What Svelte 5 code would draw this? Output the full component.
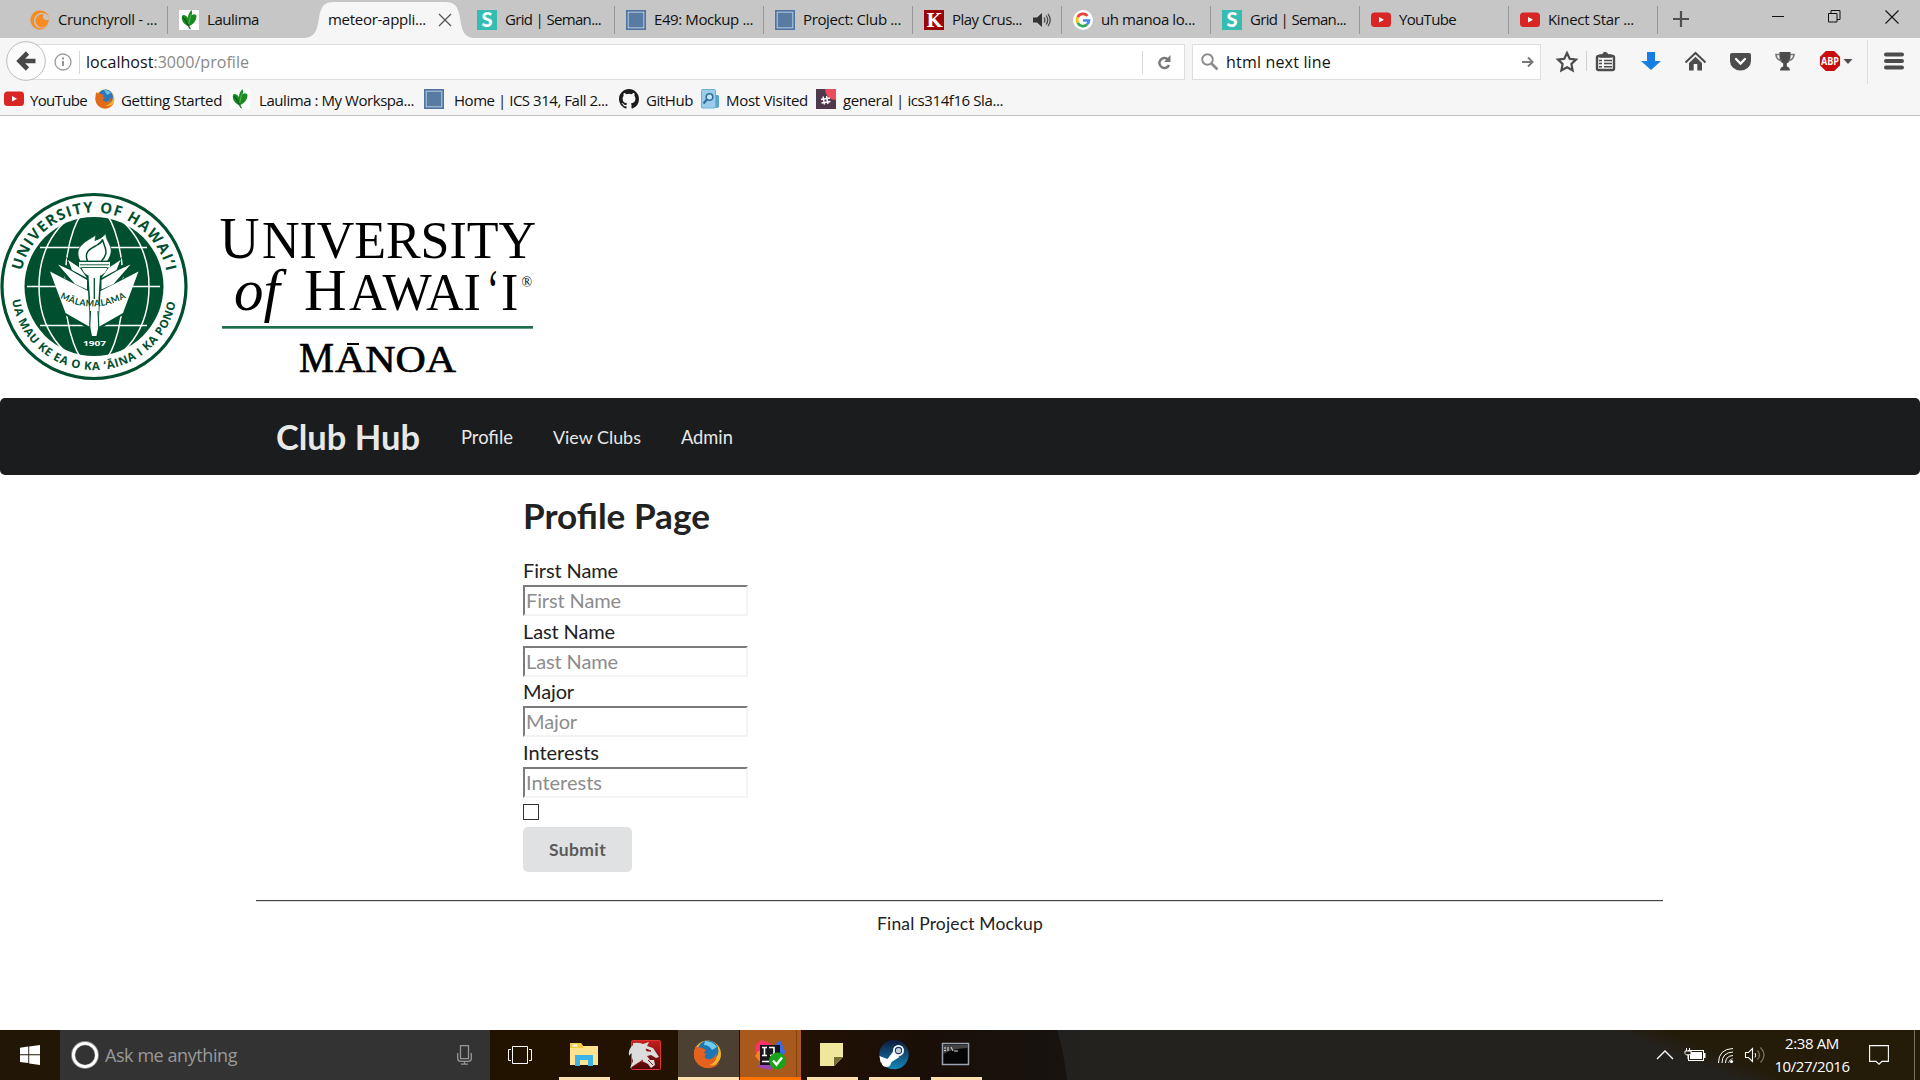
<script>
  // Spreads the letters of a label so that it fills the given width.
  function fit(node, width) {
    const natural = node.getBoundingClientRect().width;
    const count = [...node.textContent].length;
    node.style.letterSpacing = (width - natural) / count + 'px';
  }

  // Scales the font of a label to the given width, which keeps its ligatures.
  function scale(node, width) {
    const natural = node.getBoundingClientRect().width;
    const size = parseFloat(getComputedStyle(node).fontSize);
    node.style.fontSize = (size * width) / natural + 'px';
  }

  const firstTabs = [
    { icon: 'crunchy', label: 'Crunchyroll - ...', w: 99 },
    { icon: 'leaf', label: 'Laulima', w: 52 },
  ];
  const tabs = [
    { icon: 'semantic', label: 'Grid | Seman...', w: 96 },
    { icon: 'square', label: 'E49: Mockup ...', w: 99 },
    { icon: 'square', label: 'Project: Club ...', w: 98 },
    { icon: 'kong', label: 'Play Crus...', w: 70, sound: true },
    { icon: 'google', label: 'uh manoa lo...', w: 94 },
    { icon: 'semantic', label: 'Grid | Seman...', w: 96 },
    { icon: 'youtube', label: 'YouTube', w: 57 },
    { icon: 'youtube', label: 'Kinect Star ...', w: 86 },
  ];
  const bookmarks = [
    { icon: 'youtube', label: 'YouTube', w: 57, gap: 6, size: 91 },
    { icon: 'firefox', label: 'Getting Started', w: 101, gap: 6, size: 135 },
    { icon: 'leaf', label: 'Laulima : My Workspa...', w: 155, gap: 9, size: 194 },
    { icon: 'square', label: 'Home | ICS 314, Fall 2...', w: 154, gap: 10, size: 195 },
    { icon: 'github', label: 'GitHub', w: 47, gap: 7, size: 81 },
    { icon: 'visited', label: 'Most Visited', w: 82, gap: 6, size: 116 },
    { icon: 'slack', label: 'general | ics314f16 Sla...', w: 160, gap: 7, size: 190 },
  ];
  const menu = [
    { label: 'Profile', w: 52 },
    { label: 'View Clubs', w: 88 },
    { label: 'Admin', w: 52 },
  ];
  const fields = [
    { label: 'First Name', w: 95 },
    { label: 'Last Name', w: 92 },
    { label: 'Major', w: 51 },
    { label: 'Interests', w: 76 },
  ];
</script>

{#snippet favicon(name)}
  <svg class="favicon" viewBox="0 0 20 20">
    {#if name === 'crunchy'}
      <path d="M18.5 14.5A9.6 9.6 0 1 1 19.4 8 8 8 0 1 0 7 17.2 9 9 0 0 0 18.5 14.5z" fill="#f78b24" />
      <path d="M17.8 13.8A6.6 6.6 0 1 1 14 4.6a3 3 0 1 0 4.6 4.4 6 6 0 0 1-.8 4.8z" fill="#f78b24" />
    {:else if name === 'leaf'}
      <rect width="20" height="20" fill="#fff" />
      <path d="M9.500 16C5 15 2 10 3 6c1-2 4-1 6 2 0-4 2-6 3.500-8 1 2 .5 4 .5 5 2-1.500 4-.5 4.500 1 0 5-3.500 9-8 10z" fill="#198b22" />
      <path d="M4 7c2 3 4.500 5 5.500 9" stroke="#0b5d15" fill="none" stroke-width="1.300" />
      <path d="M12.500 4c-1.500 3-2.500 7-3 12" stroke="#6cc05c" fill="none" stroke-width=".8" />
      <path d="M9.500 14c0 3 .5 4 2 5" stroke="#176b20" fill="none" stroke-width="1.500" />
    {:else if name === 'semantic'}
      <rect width="20" height="20" fill="#35bdb2" />
      <text x="10" y="17" text-anchor="middle" font-family="Lato" font-weight="900" font-size="20" fill="#fff">S</text>
    {:else if name === 'square'}
      <rect x=".75" y=".75" width="18.500" height="18.500" fill="#587ba3" stroke="#4c75a6" stroke-width="1.500" />
      <rect x="2.200" y="2.200" width="15.600" height="15.600" fill="none" stroke="#b9c9db" stroke-width="1" />
    {:else if name === 'kong'}
      <rect width="20" height="20" fill="#9b0505" />
      <text x="10" y="17" text-anchor="middle" font-family="DejaVu Serif" font-weight="bold" font-size="18" fill="#fff">K</text>
    {:else if name === 'google'}
      <circle cx="10" cy="10" r="10" fill="#fff" />
      <g fill="none" stroke-width="2.700">
        <path d="M14.500 5.800A6 6 0 0 0 4.700 7.200" stroke="#ea4335" />
        <path d="M4.700 7.200a6 6 0 0 0 0 5.600" stroke="#fbbc05" />
        <path d="M4.700 12.800a6 6 0 0 0 9.300 1.800" stroke="#34a853" />
        <path d="M14 14.600a6 6 0 0 0 2-4.100h-6" stroke="#4285f4" />
      </g>
    {:else if name === 'youtube'}
      <rect y="2.500" width="20" height="14.500" rx="3.500" fill="#d92523" />
      <path d="M8 7l5 2.800L8 12.600z" fill="#fff" />
    {:else if name === 'firefox'}
      <circle cx="10" cy="10" r="9.500" fill="#f6b32c" />
      <circle cx="10.500" cy="8" r="7.500" fill="#2879bd" />
      <path d="M9 1c3 0 5 1 7 3l-4 2z" fill="#6cc3ea" />
      <path d="M1 3c1 2 3 1 5 2l3 1-1 2 2 1c-2 1-3 2-1 3 3 2 6 0 7-4 1 5-2 8-6 8.500 4 1 7 0 9-3A9.700 9.700 0 0 1 .4 11C0 8 1 6 1 3z" fill="#e46a1b" />
    {:else if name === 'github'}
      <path transform="scale(1.250)" d="M8 0C3.580 0 0 3.580 0 8c0 3.540 2.290 6.530 5.470 7.590.4.070.550-.170.550-.380 0-.190-.010-.820-.010-1.490-2.010.370-2.530-.490-2.690-.940-.090-.230-.480-.940-.820-1.130-.280-.150-.680-.520-.010-.530.630-.010 1.080.580 1.230.820.720 1.210 1.870.870 2.330.660.070-.520.280-.870.510-1.070-1.780-.200-3.640-.890-3.640-3.950 0-.870.310-1.590.820-2.150-.080-.200-.360-1.020.080-2.120 0 0 .670-.210 2.200.820a7.600 7.600 0 0 1 4 0c1.530-1.040 2.200-.820 2.200-.820.440 1.100.160 1.920.080 2.120.510.560.820 1.270.820 2.150 0 3.070-1.870 3.750-3.650 3.950.290.250.540.730.540 1.480 0 1.070-.010 1.930-.010 2.200 0 .210.150.460.550.380A8 8 0 0 0 16 8c0-4.420-3.580-8-8-8z" fill="#1b1b1b" />
    {:else if name === 'visited'}
      <path d="M14 6h4l1 1v11l-2 1h-3z" fill="#5aa3cf" />
      <rect x="1.500" y=".5" width="14" height="18.500" rx="1" fill="#9bcdea" stroke="#6fb0d8" />
      <circle cx="9.500" cy="8" r="3.300" fill="#c7e5f5" stroke="#2d719f" stroke-width="1.600" />
      <path d="M7 10.500l-3.500 4" stroke="#2d719f" stroke-width="2.200" />
    {:else if name === 'slack'}
      <rect width="20" height="20" fill="#4d394b" />
      <path d="M9 0h11v11A11 11 0 0 1 9 0z" fill="#ea4b5d" />
      <path d="M7 7.500l1.500 8M10.500 7l1.500 8M5 10.500l9-1.500M5.500 14l9-1.500" stroke="#fff" stroke-width="1.400" />
    {/if}
  </svg>
{/snippet}

{#snippet tab(t)}
  <div class="tab">
    {@render favicon(t.icon)}
    <span use:fit={t.w}>{t.label}</span>
    {#if t.sound}
      <svg class="sound" width="18" height="14" viewBox="0 0 18 14">
        <path d="M0 4.500h4L9 0v14L4 9.500H0z" fill="#333" />
        <path d="M11 4.500q1.800 2.500 0 5M13 2.500q3.500 4.500 0 9M15 .8q4.500 6.200 0 12.400" fill="none" stroke="#444" stroke-width="1.200" />
      </svg>
    {/if}
  </div>
{/snippet}

<div class="screen">
  <header class="tabs">
    {#each firstTabs as t}
      {@render tab(t)}
    {/each}
    <div class="tab active">
      <svg class="shape" width="174" height="36" viewBox="0 0 174 36">
        <path d="M0 36C14 36 15 28 17 16C19 4 22 0 32 0H143C153 0 156 4 158 16C160 28 161 36 174 36z" fill="#f6f6f6" />
      </svg>
      <span use:fit={98}>meteor-appli...</span>
      <svg class="tabx" width="14" height="14" viewBox="0 0 14 14"><path d="M1 1l12 12M13 1L1 13" stroke="#555" stroke-width="1.300" /></svg>
    </div>
    {#each tabs as t}
      {@render tab(t)}
    {/each}
    <svg class="plus" width="16" height="16" viewBox="0 0 16 16"><path d="M8 0v16M0 8h16" stroke="#505050" stroke-width="2.200" /></svg>
    <div class="window">
      <svg width="12" height="14" viewBox="0 0 12 14"><path d="M0 6.500h12" stroke="#111" /></svg>
      <svg width="13" height="13" viewBox="0 0 13 13"><path d="M.5 3.500h8.500v8.500H.5zM3 3.500V.5h9V9.500H9" fill="none" stroke="#111" /></svg>
      <svg width="14" height="14" viewBox="0 0 14 14"><path d="M.5.5l13 13M13.500.5L.5 13.500" stroke="#111" stroke-width="1.100" /></svg>
    </div>
  </header>

  <div class="tools">
    <svg class="back" width="41" height="42" viewBox="0 0 41 42">
      <circle cx="20" cy="21" r="19.300" fill="#fbfbfb" stroke="#bdbdbd" />
      <path d="M29.500 21H15M21.500 13L13.500 21l8 8" fill="none" stroke="#484848" stroke-width="4.600" />
    </svg>
    <div class="url">
      <svg width="18" height="18" viewBox="0 0 18 18"><circle cx="9" cy="9" r="8" fill="none" stroke="#999" stroke-width="1.300" /><path d="M9 8v5M9 4.500v2" stroke="#888" stroke-width="1.800" /></svg>
      <i class="rule"></i>
      <span class="address" use:fit={163}>localhost<b>:3000/profile</b></span>
      <i class="rule reload-rule"></i>
      <svg class="reload" width="14" height="15" viewBox="0 0 14 15"><path d="M11 4.500A5 5 0 1 0 12 10" fill="none" stroke="#777" stroke-width="2.400" /><path d="M13.500 0v7H7z" fill="#777" /></svg>
    </div>
    <div class="search">
      <svg width="18" height="18" viewBox="0 0 18 18"><circle cx="6.500" cy="6.500" r="5.300" fill="none" stroke="#8b8b8b" stroke-width="1.900" /><path d="M10.500 10.500l6 6" stroke="#8b8b8b" stroke-width="2.600" /></svg>
      <span use:fit={105}>html next line</span>
      <svg class="go" width="12" height="12" viewBox="0 0 12 12"><path d="M0 6h10M6 1.500L10.500 6 6 10.500" fill="none" stroke="#777" stroke-width="1.900" /></svg>
    </div>
    <svg class="toolicons" width="379" height="46" viewBox="1541 38 379 46">
      <path d="M1567 53l2.700 5.800 6.300.8-4.600 4.400 1.200 6.300-5.600-3.100-5.600 3.100 1.200-6.300-4.600-4.400 6.300-.8z" fill="none" stroke="#4c4c4c" stroke-width="2.200" />
      <path d="M1586.500 51v20" stroke="#d0d0d0" />
      <rect x="1597" y="56" width="17" height="14" rx="1.500" fill="none" stroke="#4c4c4c" stroke-width="2.400" />
      <path d="M1600 57v-2h2.500q2.500-5 5.500 0h3v2zM1599 60.500h3M1604 60.500h8M1599 63.500h3M1604 63.500h8M1599 66.700h3M1604 66.700h8" fill="#4c4c4c" stroke="#4c4c4c" stroke-width="1.500" />
      <path d="M1647 52h8v9h6l-10 9-10-9h6z" fill="#177ee6" />
      <path d="M1685.500 62.500l10-9.500 10 9.500" fill="none" stroke="#4c4c4c" stroke-width="2" />
      <path d="M1689 63l6.500-6.300L1702 63v7.500h-4.700V64h-3.600v6.500H1689z" fill="#4c4c4c" />
      <path d="M1732 53h17q2 0 2 2v6a10.500 9.500 0 0 1-21 0v-6q0-2 2-2z" fill="#4c4c4c" />
      <path d="M1736 59l4.500 4.500L1745 59" fill="none" stroke="#fff" stroke-width="2.300" stroke-linecap="round" />
      <path d="M1779.500 52h11q1 10-3.700 11.500v3q3 .8 3.200 4h-10q.2-3.200 3.200-4v-3Q1778.500 62 1779.500 52z" fill="#4c4c4c" />
      <path d="M1780 54.500h-4q.5 5.500 5.500 6M1790 54.500h4q-.5 5.500-5.500 6" fill="none" stroke="#777" stroke-width="1.700" />
      <path d="M1825.800 51h8.400l5.900 5.900v8.400l-5.900 5.700h-8.400l-5.900-5.700v-8.400z" fill="#c70d0d" />
      <text x="1830" y="65" font-family="Open Sans" font-size="11" font-weight="700" fill="#fff" text-anchor="middle" textLength="18" lengthAdjust="spacingAndGlyphs">ABP</text>
      <path d="M1843.500 59h9l-4.500 5z" fill="#4c4c4c" />
      <path d="M1867.500 40v44" stroke="#dedede" />
      <path d="M1886 54.500h16M1886 61h16M1886 67.500h16" stroke="#4c4c4c" stroke-width="4" stroke-linecap="round" />
    </svg>
  </div>

  <nav class="bookmarks">
    {#each bookmarks as b}
      <div class="bookmark" style="width:{b.size}px; gap:{b.gap}px">
        {@render favicon(b.icon)}
        <span use:fit={b.w}>{b.label}</span>
      </div>
    {/each}
  </nav>

  <main>
    <svg class="logo" width="560" height="213" viewBox="0 185 560 213">
      <defs>
        <path id="arc-top" d="M21.500 271.700A74 74 0 0 1 166.500 271.700" />
        <path id="arc-bottom" d="M12 300A83 83 0 0 0 176 300" />
        <path id="arc-motto" d="M60 298Q94 316 129 296" />
        <clipPath id="globe"><circle cx="94" cy="286.500" r="70" /></clipPath>
      </defs>
      <circle cx="94" cy="286.500" r="92" fill="#fff" stroke="#00502f" stroke-width="3.200" />
      <circle cx="94" cy="286.500" r="69.500" fill="#00502f" />
      <g fill="none" stroke="#fff" stroke-width="1.500" clip-path="url(#globe)">
        <path d="M40 247.500h107M27 286.500h133M40 325.500h107" />
        <ellipse cx="94" cy="286.500" rx="55" ry="76" />
        <ellipse cx="94" cy="286.500" rx="29" ry="80" />
      </g>
      <path d="M56 263l14 3-4-9 16 9 6 10h12l6-10 16-9-4 9 14-3-10 16 16-10-15 46-25 15h-8l-25-15-15-46 16 10z" fill="#00502f" />
      <path d="M50 271.500l38 19.500 2 36-24.500-14zM138.500 271.500l-38 19.500-2 36 24.500-14z" fill="#fff" />
      <path d="M58 264.500l11 5 18 10.500v9.500L75 284zM130.500 264.500l-11 5-18 10.500v9.500l12-5.500z" fill="#fff" />
      <path d="M68 260l12 8 7 10-15-8zM120.500 260l-12 8-7 10 15-8z" fill="#fff" />
      <path d="M80 261C73 247 85 242 96 235L95 240.500Q101 239 106 233.500C105 242 117 247 107.500 261z" fill="#fff" stroke="#00502f" stroke-width=".8" />
      <path d="M87.500 261C83 250 93 248 98 244.500Q102 242 102.500 239.500C104 247 110 252 101.500 261" fill="none" stroke="#00502f" stroke-width="1.500" />
      <path d="M79 262h31v5.500h-2.500Q105 275 99 276h-9q-6-1-8.500-8.500H79z" fill="#fff" />
      <path d="M80 264.800h29M81.500 267.500h26" stroke="#00502f" stroke-width=".9" />
      <path d="M88.500 275.500h11.500l-1.500 23 .5 25-2.500 12.500h-4.500L89.500 323.500l.5-25z" fill="#fff" />
      <path d="M94.300 278v21" stroke="#00502f" stroke-width="1.300" />
      <path d="M90.500 311l-1 19M98 311l1 19" stroke="#00502f" stroke-width="1.200" />
      <g fill="#00502f" font-family="Open Sans" font-weight="700">
        <text font-size="15"><textPath href="#arc-top" textLength="201" startOffset="1">UNIVERSITY OF HAWAI‘I</textPath></text>
        <text font-size="11.500"><textPath href="#arc-bottom" textLength="232" startOffset="0">UA MAU KE EA O KA ‘ĀINA I KA PONO</textPath></text>
        <text font-size="9" font-family="Lato"><textPath href="#arc-motto" textLength="69">MĀLAMALAMA</textPath></text>
      </g>
      <rect x="81" y="339" width="27" height="9" fill="#00502f" />
      <text x="83" y="346.300" font-family="Open Sans" font-weight="700" font-size="7.500" fill="#fff" textLength="23" lengthAdjust="spacingAndGlyphs">1907</text>

      <g font-family="Liberation Serif" fill="#000">
        <text x="219.500" y="258" font-size="60" textLength="40" lengthAdjust="spacingAndGlyphs">U</text>
        <text x="262" y="258" font-size="52" textLength="274">NIVERSITY</text>
        <text x="234" y="310" font-size="59" font-style="italic" textLength="46">of</text>
        <text x="304" y="310" font-size="59" textLength="42">H</text>
        <text x="349" y="310" font-size="52" textLength="132" lengthAdjust="spacingAndGlyphs">AWAI</text>
        <text x="487" y="310" font-size="59" textLength="12" lengthAdjust="spacingAndGlyphs">‘</text>
        <text x="501" y="310" font-size="52">I</text>
        <text x="521.500" y="287" font-size="14">®</text>
        <g stroke="#000" stroke-width=".7">
          <text x="299" y="372" font-size="43" textLength="35" lengthAdjust="spacingAndGlyphs">M</text>
          <text x="335" y="372" font-size="37.500" textLength="121" lengthAdjust="spacingAndGlyphs">ANOA</text>
        </g>
      </g>
      <rect x="347" y="343" width="12" height="2" />
      <rect x="222" y="326" width="311" height="2.700" fill="#1f6f4c" />
    </svg>

    <nav class="menu">
      <h1 use:scale={144}>Club Hub</h1>
      {#each menu as m}
        <div class="item"><span use:scale={m.w}>{m.label}</span></div>
      {/each}
    </nav>

    <section class="profile">
      <h1><span use:scale={187}>Profile Page</span></h1>
      {#each fields as f}
        <label><span use:fit={f.w}>{f.label}</span></label>
        <div class="input"><span use:fit={f.w}>{f.label}</span></div>
      {/each}
      <div class="check"></div>
      <button><span use:fit={57}>Submit</span></button>
    </section>

    <footer><span use:fit={166}>Final Project Mockup</span></footer>
  </main>

  <div class="taskbar">
    <div class="start">
      <svg width="20" height="20" viewBox="0 0 20 20"><path d="M0 2.700L8.300 1.600v7.700H0zM9.200 1.500L20 0v9.300H9.200zM0 10.200h8.300v7.900L0 17zM9.200 10.200H20V20L9.200 18.500z" fill="#fff" /></svg>
    </div>
    <div class="cortana">
      <svg width="28" height="28" viewBox="0 0 28 28"><circle cx="14" cy="14" r="11.800" fill="none" stroke="#8c8c8c" stroke-width="4.200" /><circle cx="14" cy="14" r="11.600" fill="none" stroke="#fff" stroke-width="2.800" /></svg>
      <span use:fit={132}>Ask me anything</span>
      <svg class="mic" width="15" height="20" viewBox="0 0 15 20"><path d="M3.500.7h8v13h-8zM.7 8v5.500q0 2.800 2.800 2.800h8q2.800 0 2.800-2.800V8M7.500 16.500V19M4 19.200h7" fill="none" stroke="#969696" stroke-width="1.300" /></svg>
    </div>
    <svg class="apps" width="590" height="50" viewBox="490 1030 590 50">
      <defs>
        <linearGradient id="wall"><stop offset="0" stop-color="#221300" /><stop offset=".5" stop-color="#241003" /><stop offset=".75" stop-color="#190f08" /><stop offset="1" stop-color="#171310" /></linearGradient>
        <linearGradient id="steam" x2="0" y2="1"><stop offset="0" stop-color="#10193a" /><stop offset="1" stop-color="#1387b8" /></linearGradient>
        <linearGradient id="dragon" x2="0" y2="1"><stop offset="0" stop-color="#c3201e" /><stop offset="1" stop-color="#4b0707" /></linearGradient>
      </defs>
      <rect x="490" y="1030" width="590" height="50" fill="url(#wall)" />
      <path d="M1057 1030h23v50h-13q-3-27-10-50z" fill="#22211f" />
      <rect x="678" y="1030" width="61" height="50" fill="#4c4033" />
      <rect x="740" y="1030" width="61" height="50" fill="#a8591b" />
      <path d="M796.500 1030v47" stroke="#85420f" />
      <g fill="#ffdfae">
        <path d="M559 1077h51v3h-51zM678 1077h61v3h-61zM807 1077h51v3h-51zM869 1077h51v3h-51zM931 1077h51v3h-51z" />
        <path d="M740 1077h61v3h-61z" fill="#ff7200" />
      </g>
      <path d="M512.500 1046.500h15v17h-15zM511 1049.500h-2.500v11h2.500M529 1049.500h2.500v11h-2.500" fill="none" stroke="#fff" />
      <path d="M570 1043h11l2 3h15v19h-28z" fill="#ffe390" />
      <path d="M570 1043h11l2 3v2h-13z" fill="#f6c843" />
      <path d="M572.500 1044.500h5v2h-5z" fill="#fff" />
      <path d="M575 1066v-11h18v11h-5v-6h-8v6z" fill="#3eb3e6" />
      <rect x="631.500" y="1040.500" width="29" height="29" rx="1" fill="url(#dragon)" stroke="#df3434" />
      <path d="M633 1043q6-1 10 1l6-2-2 4 6 2 4 6 2 3-3 1-5-3-4 1 3 4 4 0 1 5-4 3-3-4-6-3-4 2-8 5 3-7q-2-4-1-8-2 1-3 3-1-7 4-11z" fill="#dcdcdc" />
      <path d="M646 1049l5 2h-4zM648 1060l5 5M634 1066l9-6" stroke="#8d1515" fill="#8d1515" />
      <circle cx="707.500" cy="1054" r="13.500" fill="#f6b32c" />
      <circle cx="708" cy="1051" r="10.500" fill="#1c76b5" />
      <path d="M705 1041q8 0 12 6l-5 3q-3-5-8-5z" fill="#71cbee" />
      <path d="M696 1046c1 2 4 1 6 2l4 2-2 3 3 1c-3 1-3 4 0 5 4 1 8-1 9-6 2 6-2 11-7 12 4 1 8 0 11-3-6 9-20 8-25-2-2-5-1-10 1-14z" fill="#e5611d" />
      <path d="M756 1045l5-5 11 4-6 17-11-9z" fill="#fb3168" />
      <path d="M774 1046l6-6 5 11-2 8-9 3z" fill="#3a6ce8" />
      <path d="M758 1051l-3 5 4 5 6 1v-11z" fill="#fd7d22" />
      <path d="M760 1061l-2 6 12 3 6-5z" fill="#9b48b6" />
      <rect x="760" y="1045" width="20" height="20" fill="#18151c" />
      <path d="M762 1047.500h5M764.500 1047.500v8M762 1055.500h5M769 1047.500h5v5q0 3-4 3" fill="none" stroke="#fff" stroke-width="1.600" />
      <path d="M762 1061.500h7" stroke="#fff" stroke-width="1.600" />
      <circle cx="777.500" cy="1061" r="8.500" fill="#17a317" />
      <path d="M773 1060.500l3.500 4 5.500-7" fill="none" stroke="#fff" stroke-width="2.400" />
      <path d="M820 1043h23v14l-9 9h-14z" fill="#f1e79c" />
      <path d="M843 1057l-9 9v-9z" fill="#766c35" />
      <circle cx="894" cy="1054.500" r="14.700" fill="url(#steam)" />
      <path d="M879.500 1056l8 3 6-8 6 6-8 5q-1 5-5 5t-5-4l-1-1z" fill="#fff" />
      <circle cx="898.500" cy="1050.500" r="4.600" fill="#13366a" stroke="#fff" stroke-width="1.800" />
      <circle cx="898.500" cy="1050.500" r="2.600" fill="#c8ced8" />
      <rect x="942.500" y="1043.500" width="26" height="21" fill="#050505" stroke="#9aa4b0" stroke-width="1.500" />
      <path d="M943 1045v9q10-6 25-6v-3z" fill="#444" />
      <path d="M944 1048h2M944 1050.500h2M948 1047v4M951 1047l2 4M954 1051h4" stroke="#ddd" />
    </svg>
    <div class="tray">
      <svg class="trayicons" width="110" height="50" viewBox="1655 1030 110 50">
        <path d="M1657 1059l8-8 8 8" fill="none" stroke="#fff" stroke-width="1.300" />
        <rect x="1688.500" y="1050.500" width="15" height="10" fill="none" stroke="#fff" />
        <path d="M1690 1052h12v7h-12zM1704 1053h1.500v5h-1.500z" fill="#fff" />
        <path d="M1686.500 1048v3M1689.500 1048v3M1685 1051h6v2.500l-1.500 1.500h-3l-1.500-1.500zM1688 1054v5" stroke="#fff" fill="#241c0a" />
        <g fill="none" stroke="#fff"><path d="M1718.500 1063q0-14 14.500-14.500M1722 1063q0-10.500 11-11M1725.500 1063q0-7 7.500-7.500" /><path d="M1728.500 1063q.5-4 4.500-4.500" stroke="#aaa" /></g>
        <circle cx="1731.500" cy="1061.500" r="1.600" fill="#fff" />
        <path d="M1745.500 1052.500h3l4-4v13l-4-4h-3z" fill="none" stroke="#fff" stroke-width="1.100" />
        <path d="M1755 1053q1.500 2 0 4.500" fill="none" stroke="#fff" />
        <path d="M1757.500 1050.500q4 4.500 0 9M1760.500 1047.500q7 7.500 0 15" fill="none" stroke="#77715f" stroke-width="1.300" />
      </svg>
      <div class="clock"><span use:fit={54}>2:38 AM</span><span use:fit={75}>10/27/2016</span></div>
      <svg class="note" width="20" height="20" viewBox="0 0 20 20"><path d="M.6.600h18.800v15.800h-6.400l-3 2.800-3-2.800H.6z" fill="none" stroke="#fff" stroke-width="1.100" /></svg>
      <i class="edge"></i>
    </div>
  </div>
</div>

<style>
  :global(body) { background: #fff; overflow: hidden; }
  .screen { width: 1920px; height: 1080px; display: flex; flex-direction: column; overflow: hidden; font-family: "Open Sans", "Noto Sans", sans-serif; font-size: 15px; color: #111; background: #fff; }
  .screen * { box-sizing: border-box; }
  svg { display: block; flex: none; overflow: visible; }
  span, h1 { white-space: nowrap; }
  .favicon { width: 20px; height: 20px; }

  .tabs { display: flex; height: 38px; flex: none; background: #c6c6c6; padding-left: 19px; }
  .tab { position: relative; width: 149px; flex: none; display: flex; align-items: center; gap: 8px; padding: 2px 0 0 11px; }
  .tab span { padding-bottom: 1.5px; }
  .tab::after { content: ""; position: absolute; right: 0; top: 6px; width: 1px; height: 28px; background: #979797; }
  .tab:nth-child(2)::after, .tab.active::after { display: none; }
  .tab.active { padding-left: 11px; gap: 12px; }
  .active .shape { position: absolute; left: -15px; top: 2px; }
  .active span, .active .tabx { position: relative; }
  .sound { margin-left: 3px; }
  .plus { margin: 11px 0 0 15px; }
  .window { display: flex; gap: 44px; margin: 10px 21px 0 auto; }

  .tools { display: flex; height: 46px; flex: none; background: #f6f6f6; }
  .back { position: relative; margin: 2px 0 0 6px; z-index: 1; }
  .url { display: flex; align-items: center; width: 1153px; height: 36px; margin: 6px 0 0 -15px; padding-left: 21px; background: #fff; border: 1px solid #dedede; font-size: 16px; }
  .rule { width: 1px; height: 23px; background: #d8d8d8; margin: 0 6px 0 7px; }
  .reload-rule { margin: 0 14px 0 auto; }
  .reload { margin-right: 13px; }
  .address b { font-weight: 400; color: #888; }
  .search { display: flex; align-items: center; width: 349px; height: 36px; margin: 6px 0 0 7px; padding: 0 6px 0 8px; gap: 7px; background: #fff; border: 1px solid #dedede; font-size: 16px; }
  .go { margin-left: auto; }

  .bookmarks { display: flex; height: 32px; flex: none; background: #f6f6f6; border-bottom: 1px solid #c0c0c0; padding: 0 0 1px 4px; }
  .bookmark { display: flex; align-items: center; flex: none; }
  .bookmark span { padding-top: 1.500px; }

  main { display: flex; flex-direction: column; flex: none; height: 914px; padding-top: 69px; font-family: Lato, sans-serif; color: #222; }
  .menu { display: flex; align-items: center; flex: none; height: 77px; background: #1b1c1d; border-radius: 5px; padding-left: 276px; color: #e8e8e8; font-size: 17.5px; }
  .menu h1 { margin: -1px 21px 0 0; font-size: 35px; font-weight: 700; }
  .item { padding: 0 20px; }
  .profile { display: flex; flex-direction: column; align-items: flex-start; padding: 17px 0 0 523px; height: 425px; }
  .profile h1 { margin: 0 0 20px; height: 46px; line-height: 46px; font-size: 35px; font-weight: 700; }
  label { height: 27px; line-height: 25px; font-size: 20px; }
  .input { width: 225px; height: 31px; line-height: 27px; font-size: 20px; margin-bottom: 2.500px; padding-left: 1px; color: #8c8c8c; border: 2px solid #f3f3f3; border-top-color: #7b7b7b; border-left-color: #7b7b7b; }
  .check { width: 16px; height: 16px; margin: 4px 0 7px; border: 1px solid #333; }
  button { width: 109px; height: 45px; padding: 0; border: 0; border-radius: 5px; background: #e0e1e2; color: #5a5a5a; font: 700 17.5px Lato, sans-serif; }
  footer { width: 1407px; margin-left: 256px; border-top: 1px solid #444; box-shadow: inset 0 1px #ddd; text-align: center; font-size: 17.5px; line-height: 24px; padding: 11px 0 0 1px; }

  .taskbar { display: flex; height: 50px; flex: none; background: #24221f; }
  .start { width: 60px; padding: 15px 20px; background: #221706; }
  .cortana { display: flex; align-items: center; width: 430px; padding: 0 18px 0 11px; gap: 6px; background: #333; color: #999; font-size: 18px; }
  .mic { margin-left: auto; }
  .tray { flex: 1; display: flex; align-items: center; padding-left: 575px; color: #fff; background: linear-gradient(22deg, #24221f 0 68%, #241b08 74%); }
  .clock { display: flex; flex-direction: column; align-items: center; width: 94px; line-height: 23px; font-size: 15px; }
  .note { margin-left: 10px; }
  .edge { width: 1px; height: 50px; margin-left: 25px; background: #77705f; }
</style>
